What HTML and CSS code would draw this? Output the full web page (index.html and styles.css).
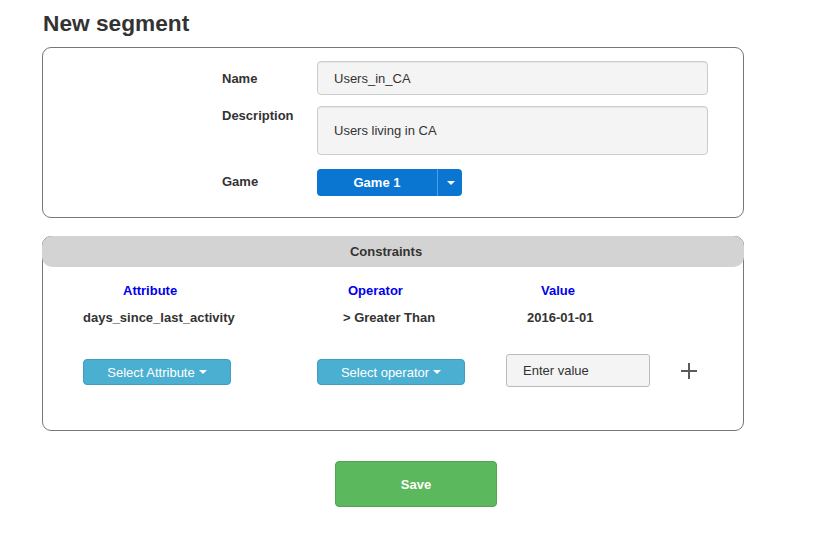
FILE: index.html
```html
<!DOCTYPE html>
<html>
<head>
<meta charset="utf-8">
<link rel="stylesheet" href="styles.css">
</head>
<body>
<div class="page">
  <h1 class="title">New segment</h1>

  <div class="box details">
    <div class="form">
      <div class="label center">Name</div>
      <div class="field input">Users_in_CA</div>

      <div class="label top">Description</div>
      <div class="field textarea">Users living in CA</div>

      <div class="label center">Game</div>
      <div class="split">
        <div class="split-main">Game 1</div>
        <div class="split-caret"><span class="caret"></span></div>
      </div>
    </div>
  </div>

  <div class="box constraints">
    <div class="box-header">Constraints</div>
    <div class="grid heads">
      <div class="head h1">Attribute</div>
      <div class="head h2">Operator</div>
      <div class="head h3">Value</div>
    </div>
    <div class="grid data">
      <div class="cell d1">days_since_last_activity</div>
      <div class="cell d2">&gt; Greater Than</div>
      <div class="cell d3">2016-01-01</div>
    </div>
    <div class="grid controls">
      <div class="btn-info">Select Attribute <span class="caret"></span></div>
      <div class="btn-info">Select operator <span class="caret"></span></div>
      <div class="value-input">Enter value</div>
      <div class="plus">
        <svg width="18" height="18" viewBox="0 0 18 18"><path d="M9 1V17M1 9H17" stroke="#5a5a5a" stroke-width="2" fill="none"/></svg>
      </div>
    </div>
  </div>

  <div class="save-row">
    <div class="btn-save">Save</div>
  </div>
</div>
</body>
</html>
```

FILE: styles.css
```css
html, body {
  margin: 0;
  padding: 0;
  background: #fff;
}
body {
  font-family: "Liberation Sans", Arial, Helvetica, sans-serif;
  font-size: 13px;
  color: #333;
}
.page {
  padding-left: 42px;
  width: 702px;
}
.title {
  margin: 0;
  padding-top: 10px;
  height: 47px;
  line-height: 26px;
  font-size: 22.7px;
  font-weight: bold;
  color: #333;
  box-sizing: border-box;
  padding-left: 1px;
}
.box {
  border: 1px solid #777;
  border-radius: 9px;
  box-sizing: border-box;
}
.details {
  height: 171px;
  padding-top: 13px;
}
.form {
  display: grid;
  grid-template-columns: 95px 391px;
  grid-template-rows: 34px 49px 27px;
  row-gap: 11px;
  margin-left: 179px;
}
.form > :nth-child(5), .form > :nth-child(6) { margin-top: 3px; }
.label {
  font-weight: bold;
  font-size: 13px;
  color: #333;
}
.label.center {
  display: flex;
  align-items: center;
}
.label.top {
  padding-top: 2px;
}
.field {
  background: #f4f4f4;
  border: 1px solid #ccc;
  border-radius: 4px;
  box-sizing: border-box;
  padding-left: 16px;
  display: flex;
  align-items: center;
  font-size: 13px;
  color: #333;
  box-shadow: inset 0 1px 1px rgba(0,0,0,0.06);
}
.split {
  display: flex;
  width: 145px;
  height: 27px;
}
.split-main {
  flex: 0 0 121px;
  background: #0a76d1;
  color: #fff;
  font-weight: bold;
  border-radius: 4px 0 0 4px;
  display: flex;
  align-items: center;
  justify-content: center;
  border-right: 1px solid #4a9fe6;
  box-sizing: border-box;
}
.split-caret {
  flex: 1;
  background: #0a76d1;
  border-radius: 0 4px 4px 0;
  display: flex;
  align-items: center;
  justify-content: center;
}
.caret {
  display: inline-block;
  width: 0;
  height: 0;
  border-left: 4px solid transparent;
  border-right: 4px solid transparent;
  border-top: 4px solid #fff;
  vertical-align: middle;
  margin-left: 1px;
}
.constraints {
  margin-top: 18px;
  height: 195px;
}
.box-header {
  margin: -1px -1px 0 -1px;
  height: 31px;
  background: #d3d3d3;
  border-radius: 10px;
  display: flex;
  align-items: center;
  justify-content: center;
  padding-right: 14px;
  font-weight: bold;
  font-size: 13px;
  color: #333;
}
.grid {
  display: grid;
  grid-template-columns: 234px 189px 182px auto;
  margin-left: 40px;
}
.heads {
  margin-top: 15px;
  line-height: 18px;
}
.head {
  color: #0000ee;
  font-weight: bold;
}
.h1 { padding-left: 40px; }
.h2 { padding-left: 31px; }
.h3 { padding-left: 35px; }
.data {
  margin-top: 9px;
  line-height: 18px;
}
.cell {
  font-weight: bold;
  color: #333;
}
.d2 { padding-left: 26px; }
.d3 { padding-left: 21px; }
.controls {
  margin-top: 27px;
  align-items: center;
  height: 33px;
}
.btn-info {
  width: 148px;
  height: 26px;
  box-sizing: border-box;
  background: #4bafd1;
  border: 1px solid #3f9dc0;
  border-radius: 4px;
  color: #fff;
  display: flex;
  align-items: center;
  justify-content: center;
  gap: 3px;
  margin-top: 3px;
}
.value-input {
  width: 144px;
  height: 33px;
  box-sizing: border-box;
  background: #f4f4f4;
  border: 1px solid #bbb;
  border-radius: 3px;
  padding-left: 16px;
  display: flex;
  align-items: center;
  color: #333;
}
.plus {
  margin-left: -8px;
  display: flex;
  align-items: center;
}
.plus svg { display: block; }
.save-row {
  padding-top: 30px;
}
.btn-save {
  margin-left: 293px;
  width: 162px;
  height: 46px;
  box-sizing: border-box;
  background: #5cb85c;
  border: 1px solid #4fa64f;
  border-radius: 4px;
  color: #fff;
  font-weight: bold;
  display: flex;
  align-items: center;
  justify-content: center;
}
```
